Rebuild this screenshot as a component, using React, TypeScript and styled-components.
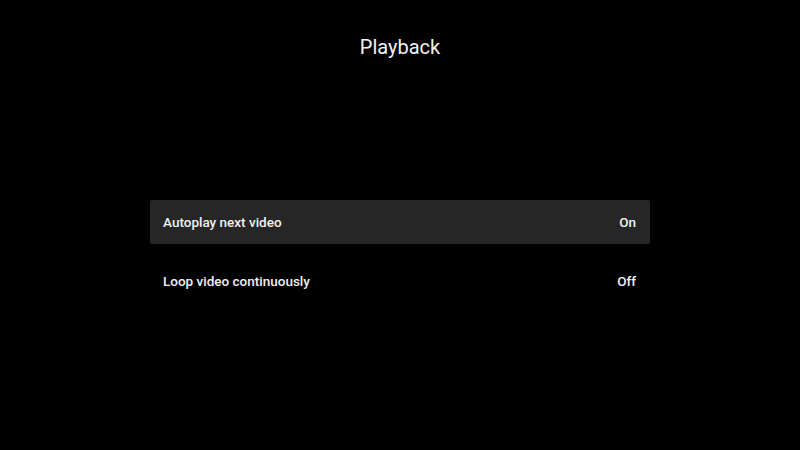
import React from 'react'
import styled, { createGlobalStyle } from 'styled-components'

const GlobalStyle = createGlobalStyle`
  html, body {
    margin: 0;
    padding: 0;
    background: #000;
  }
  body {
    font-family: Roboto, "Noto Sans", sans-serif;
    color: #fff;
  }
`

const Screen = styled.div`
  width: 800px;
  height: 450px;
  background: #000;
  display: flex;
  flex-direction: column;
  align-items: center;
  box-sizing: border-box;
  padding-top: 34px;
`

const Title = styled.h1`
  margin: 0;
  font-size: 20px;
  font-weight: 400;
  line-height: 26px;
  color: #f2f2f2;
`

const List = styled.div`
  width: 500px;
  margin-top: 140px;
  display: flex;
  flex-direction: column;
  gap: 15px;
`

const Row = styled.div<{ $focused?: boolean }>`
  height: 44px;
  display: flex;
  align-items: center;
  justify-content: space-between;
  padding: 0 14px 0 13px;
  border-radius: 2px;
  background: ${({ $focused }) => ($focused ? '#262626' : 'transparent')};
  font-size: 13.5px;
  font-weight: 500;
  color: #f0f0f0;
`

const items = [
  { label: 'Autoplay next video', value: 'On', focused: true },
  { label: 'Loop video continuously', value: 'Off', focused: false },
]

export default function App() {
  return (
    <>
      <GlobalStyle />
      <Screen>
        <Title>Playback</Title>
        <List>
          {items.map((item) => (
            <Row key={item.label} $focused={item.focused}>
              <span>{item.label}</span>
              <span>{item.value}</span>
            </Row>
          ))}
        </List>
      </Screen>
    </>
  )
}
